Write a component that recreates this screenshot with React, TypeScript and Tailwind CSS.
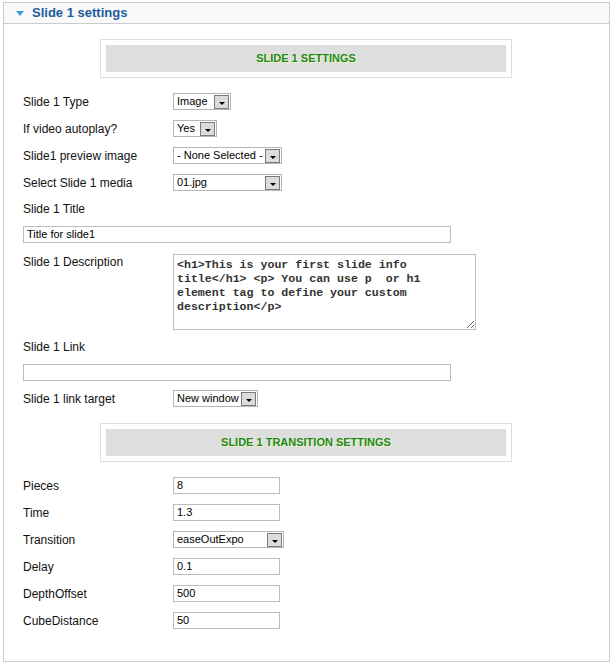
import React from "react";

const font = { fontFamily: '"Liberation Sans", Arial, sans-serif' };

function Select({ value, width }: { value: string; width: number }) {
  return (
    <div
      className="flex h-[17px] items-center justify-between border border-[#b5b5b5] bg-white pl-[3px] pr-[1px] text-[11px] text-black"
      style={{ width }}
    >
      <span className="leading-none">{value}</span>
      <span className="flex h-[14px] w-[15px] items-end justify-center border border-[#7a7a7a] bg-[#dcdcdc] pb-[3px]">
        <span className="h-0 w-0 border-x-[3px] border-t-[3px] border-x-transparent border-t-black" />
      </span>
    </div>
  );
}

function TextInput({ value, width }: { value: string; width: number }) {
  return (
    <div
      className="flex h-[17px] items-center border border-[#bcbcbc] bg-white pl-[3px] text-[11px] text-black"
      style={{ width }}
    >
      {value}
    </div>
  );
}

function Heading({ text }: { text: string }) {
  return (
    <div className="ml-[77px] w-[412px] border border-[#dcdcdc] p-[5px]">
      <div className="flex h-[27px] items-center justify-center bg-[#dedede] text-[11px] font-bold text-[#1d8a1d] [text-shadow:1px_1px_0_#f4f4c8]">
        {text}
      </div>
    </div>
  );
}

function Row({ label, children, h = "h-[27px]" }: { label: string; children?: React.ReactNode; h?: string }) {
  return (
    <div className={`flex ${h} items-center`}>
      <div className="w-[150px] text-[12px] text-[#111]">{label}</div>
      {children}
    </div>
  );
}

export default function App() {
  const desc =
    "<h1>This is your first slide info title</h1> <p> You can use p  or h1 element tag to define your custom description</p>";

  return (
    <div className="min-h-[664px] bg-white pl-[3px] pt-[2px]" style={font}>
      <div className="h-[660px] w-[607px] border border-[#cccccc] bg-white">
        <div className="flex h-[21px] items-center gap-[8px] border-b border-[#cccccc] bg-[#f9f9f9] pl-[12px]">
          <span className="h-0 w-0 border-x-[4px] border-t-[5px] border-x-transparent border-t-[#3a9fd8]" />
          <span className="text-[13px] font-bold text-[#1b5c9f]">Slide 1 settings</span>
        </div>

        <div className="pl-[19px] pr-[3px] pt-[15px]">
          <Heading text="SLIDE 1 SETTINGS" />

          <div className="mt-[10px]">
            <Row label="Slide 1 Type">
              <Select value="Image" width={58} />
            </Row>
            <Row label="If video autoplay?">
              <Select value="Yes" width={44} />
            </Row>
            <Row label="Slide1 preview image">
              <Select value="- None Selected -" width={109} />
            </Row>
            <Row label="Select Slide 1 media">
              <Select value="01.jpg" width={109} />
            </Row>
            <Row label="Slide 1 Title" h="h-[25px]" />
            <div className="flex h-[27px] items-center">
              <TextInput value="Title for slide1" width={428} />
            </div>
            <div className="flex h-[85px] items-start">
              <div className="flex h-[27px] w-[150px] items-center text-[12px] text-[#111]">Slide 1 Description</div>
              <textarea
                readOnly
                value={desc}
                className="mt-[6px] h-[76px] w-[303px] border border-[#bcbcbc] px-[3px] pt-[3px] text-[11.6px] font-bold leading-[14px] text-[#333] outline-none"
                style={{ fontFamily: '"Liberation Mono", "Courier New", monospace' }}
              />
            </div>
            <Row label="Slide 1 Link" />
            <div className="flex h-[25px] items-center">
              <TextInput value="" width={428} />
            </div>
            <Row label="Slide 1 link target">
              <Select value="New window" width={85} />
            </Row>
          </div>

          <div className="mt-[11px]">
            <Heading text="SLIDE 1 TRANSITION SETTINGS" />
          </div>

          <div className="mt-[10px]">
            <Row label="Pieces">
              <TextInput value="8" width={107} />
            </Row>
            <Row label="Time">
              <TextInput value="1.3" width={107} />
            </Row>
            <Row label="Transition">
              <Select value="easeOutExpo" width={111} />
            </Row>
            <Row label="Delay">
              <TextInput value="0.1" width={107} />
            </Row>
            <Row label="DepthOffset">
              <TextInput value="500" width={107} />
            </Row>
            <Row label="CubeDistance">
              <TextInput value="50" width={107} />
            </Row>
          </div>
        </div>
      </div>
    </div>
  );
}
